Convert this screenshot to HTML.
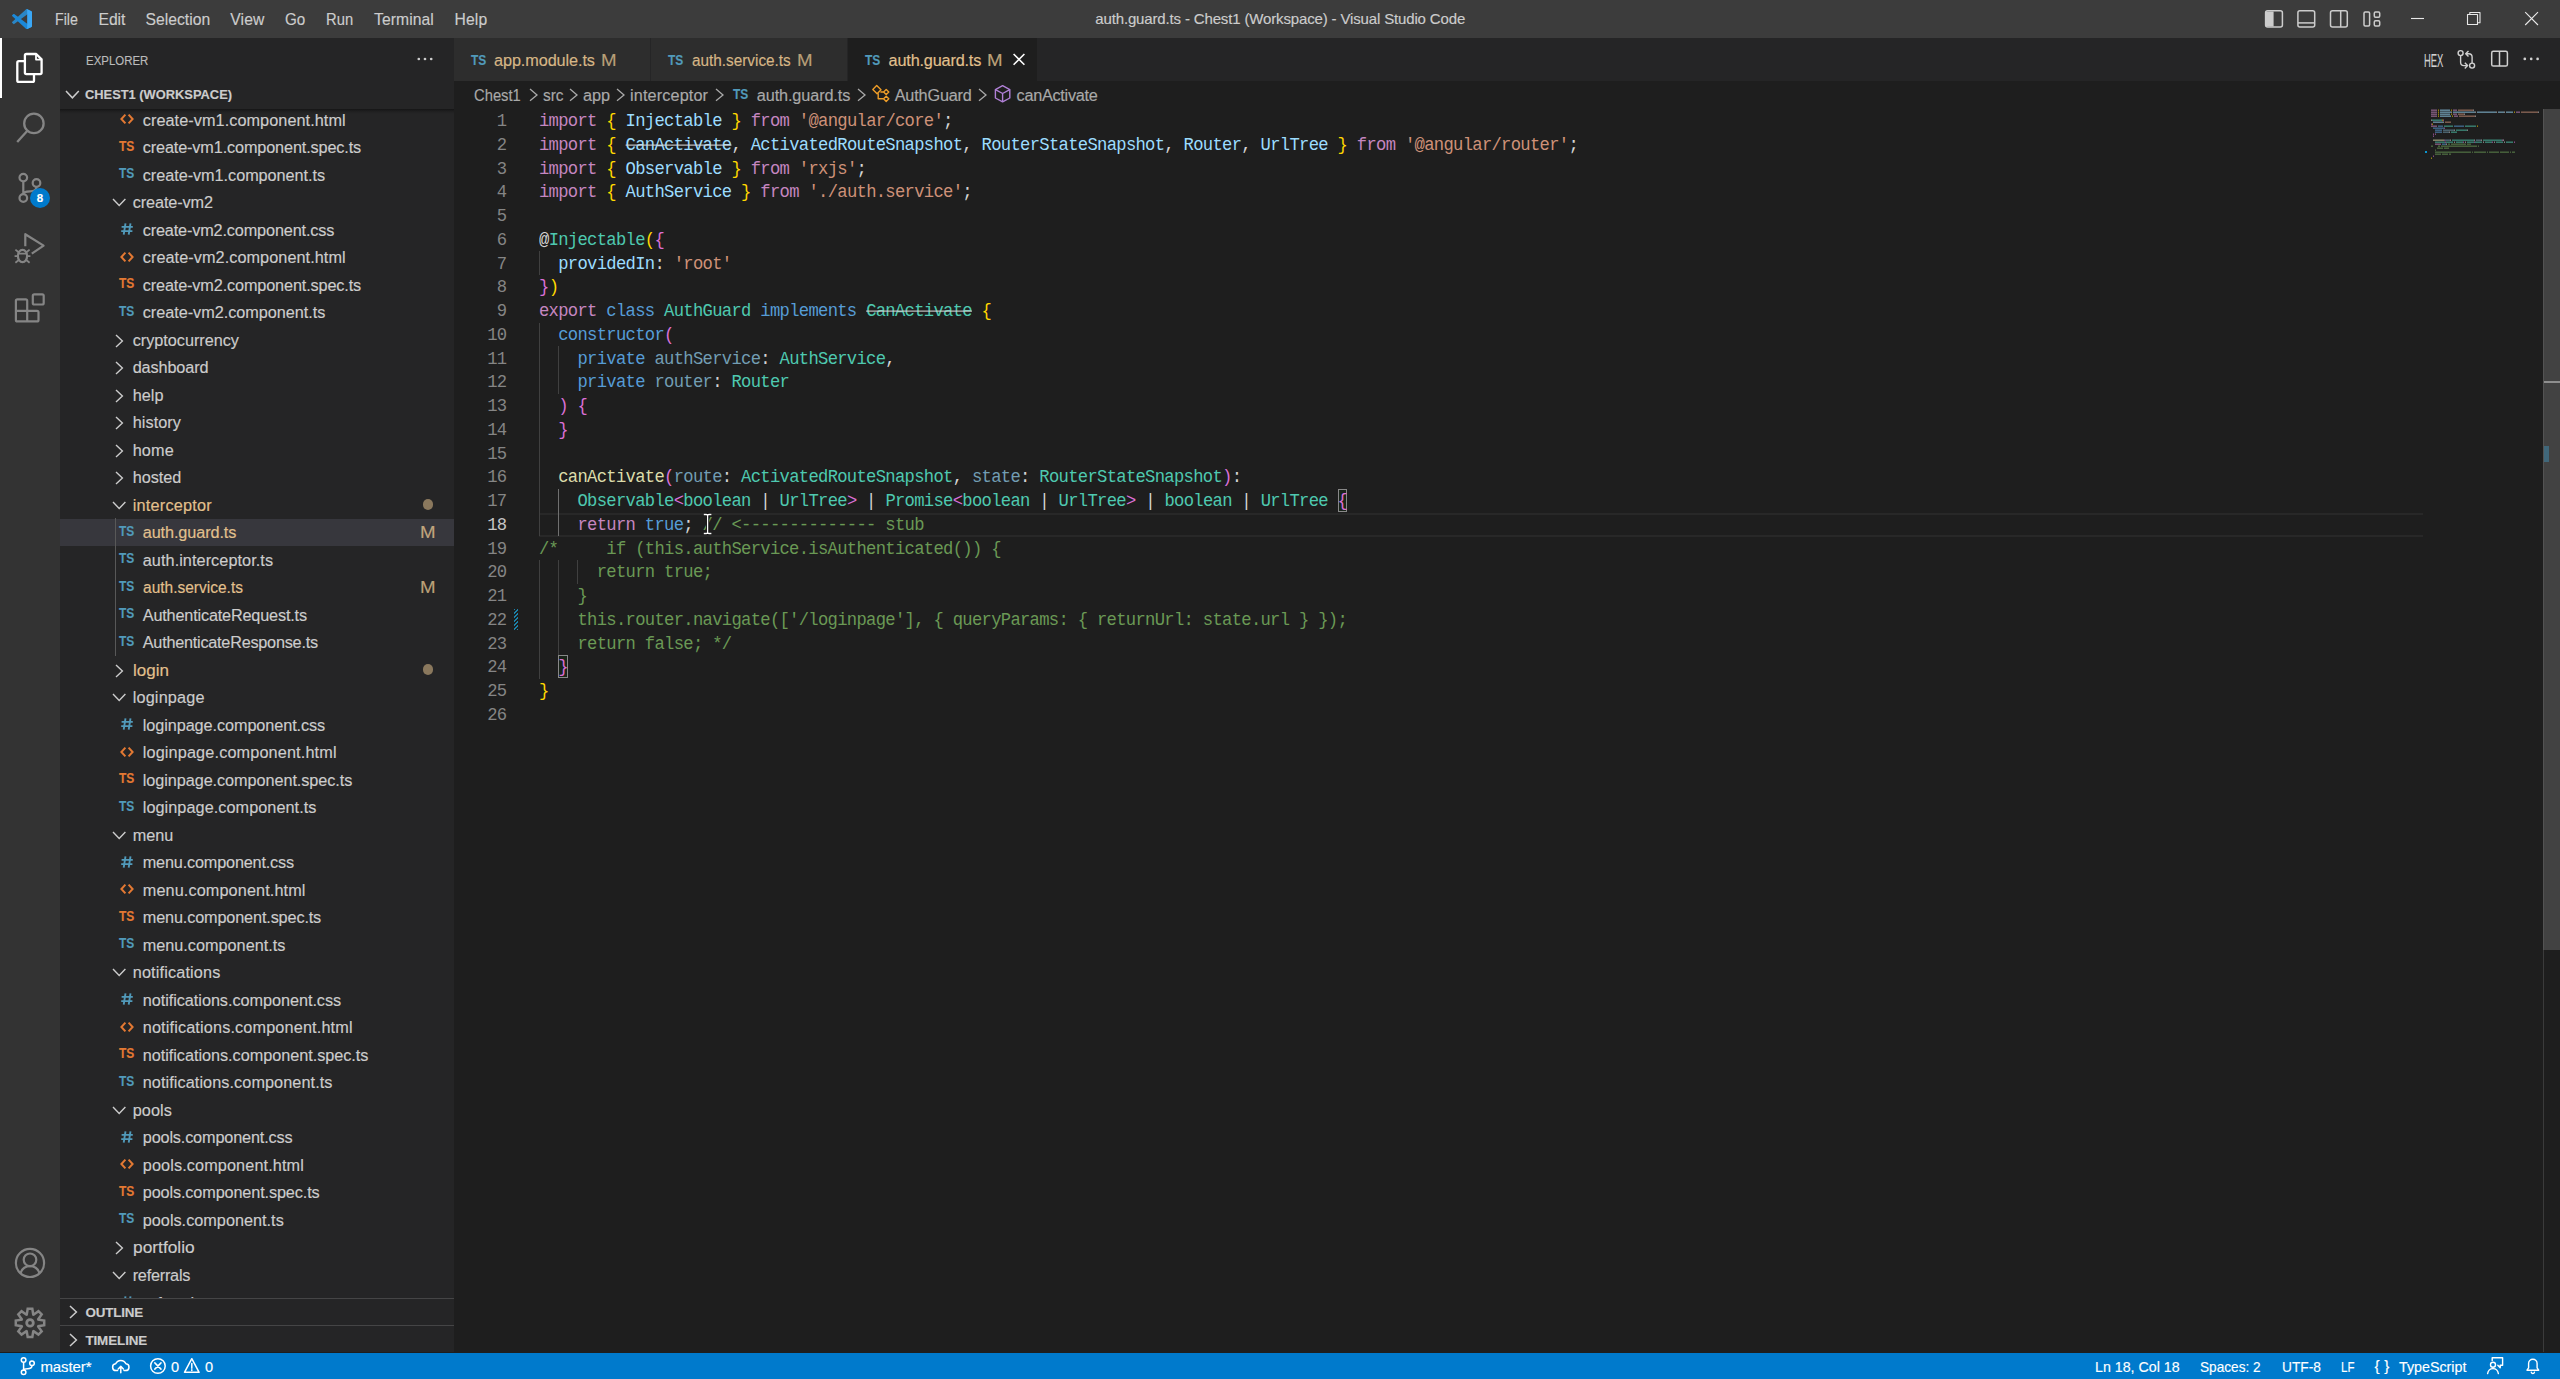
<!DOCTYPE html>
<html><head><meta charset="utf-8"><title>auth.guard.ts - Chest1 (Workspace) - Visual Studio Code</title>
<style>
*{margin:0;padding:0;box-sizing:border-box}
html,body{width:2560px;height:1379px;overflow:hidden;background:#1e1e1e}
body{position:relative;font-family:"Liberation Sans",sans-serif}
.b{position:absolute;display:block}
.t{position:absolute;white-space:pre;line-height:1;font-family:"Liberation Sans",sans-serif;-webkit-text-stroke:.15px currentColor}
.m{font-family:"Liberation Mono",monospace}
.ln,.cl{position:absolute;white-space:pre;font-family:"Liberation Mono",monospace;font-size:17.2px;line-height:23.75px;height:23.75px;letter-spacing:-0.6942px}
.ln{transform:scaleY(1.04);transform-origin:0 16.5px;left:454px;width:52.39px;text-align:right}
.cl{left:539.0px;color:#d4d4d4;transform:scaleY(1.08);transform-origin:0 16.5px}
.s{text-decoration:line-through #d4d4d4 1px}
</style></head>
<body>
<div class="b" style="left:454px;top:38px;width:2106px;height:43.5px;background:#252526;"></div>
<div class="b" style="left:454px;top:81px;width:2106px;height:1271px;background:#1e1e1e;"></div>
<div class="b" style="left:454px;top:38px;width:196px;height:43px;background:#2d2d2d;"></div>
<div class="b" style="left:651px;top:38px;width:196px;height:43px;background:#2d2d2d;"></div>
<div class="b" style="left:848px;top:38px;width:189px;height:43.5px;background:#1e1e1e;"></div>
<span class="t" style="left:470.60px;top:52.00px;font-size:15.0px;color:#519aba;font-weight:700;transform:scaleX(0.7980);transform-origin:0 0;">TS</span>
<span class="t" style="left:494.00px;top:52.00px;font-size:16.25px;color:#d6b686;letter-spacing:-0.091px;">app.module.ts</span>
<span class="t" style="left:600.50px;top:53.00px;font-size:16.7px;color:#b89f78;transform:scaleX(1.1204);transform-origin:0 0;">M</span>
<span class="t" style="left:668.10px;top:52.00px;font-size:15.0px;color:#519aba;font-weight:700;transform:scaleX(0.7980);transform-origin:0 0;">TS</span>
<span class="t" style="left:692.20px;top:52.00px;font-size:16.25px;color:#d6b686;transform:scaleX(0.9429);transform-origin:0 0;">auth.service.ts</span>
<span class="t" style="left:797.40px;top:53.00px;font-size:16.7px;color:#b89f78;transform:scaleX(1.1204);transform-origin:0 0;">M</span>
<span class="t" style="left:865.20px;top:52.00px;font-size:15.0px;color:#519aba;font-weight:700;transform:scaleX(0.7980);transform-origin:0 0;">TS</span>
<span class="t" style="left:888.60px;top:52.00px;font-size:16.25px;color:#e2c08d;letter-spacing:-0.180px;">auth.guard.ts</span>
<span class="t" style="left:987.20px;top:53.00px;font-size:16.7px;color:#bda279;transform:scaleX(1.1204);transform-origin:0 0;">M</span>
<svg class="b" style="left:1010px;top:50px" width="18" height="18" viewBox="1010 50 18 18" fill="none" stroke="#ffffff" stroke-width="1.6"><path d="M1013.6 54l10.800 10.800M1024.400 54l-10.800 10.800"/></svg>
<span class="t" style="left:2423.90px;top:53.00px;font-size:17.6px;color:#d0d0d0;transform:scaleX(.535);transform-origin:0 0">HEX</span>
<svg class="b" style="left:2450px;top:46px" width="100" height="26" viewBox="2450 46 100 26" fill="none" stroke="#d0d0d0" stroke-width="1.4" stroke-linejoin="round">
<circle cx="2460.600" cy="53.100" r="2.500"/><circle cx="2472.100" cy="65.600" r="2.500"/>
<path d="M2460.600 55.600v6.600q0 3.400 3.400 3.400h3.400M2464.800 62.800l2.800 2.800l-2.800 2.800"/>
<path d="M2472.100 63.100v-6q0-3.400-3.400-3.400h-2.800M2468.500 50.900l-2.800 2.800l2.800 2.800"/>
<rect x="2491.700" y="51.300" width="15.700" height="14.800" rx="1.600" stroke-width="1.500"/><path d="M2499.500 51.300v14.800" stroke-width="1.500"/>
<g fill="#d0d0d0" stroke="none"><circle cx="2524.800" cy="58.900" r="1.350"/><circle cx="2531.200" cy="58.900" r="1.350"/><circle cx="2537.600" cy="58.900" r="1.350"/></g>
</svg>
<span class="t" style="left:473.75px;top:87.00px;font-size:16.25px;color:#a9a9a9;transform:scaleX(0.9087);transform-origin:0 0;">Chest1</span>
<svg class="b" style="left:527.80px;top:86.95px" width="11.00" height="15.80" viewBox="527.80 86.95 11.00 15.80" fill="none" stroke="#a9a9a9" stroke-width="1.3"><path d="M529.80 88.95L536.80 94.85L529.80 100.75"/></svg>
<span class="t" style="left:542.50px;top:87.00px;font-size:16.25px;color:#a9a9a9;transform:scaleX(0.9505);transform-origin:0 0;">src</span>
<svg class="b" style="left:568.00px;top:86.95px" width="11.00" height="15.80" viewBox="568.00 86.95 11.00 15.80" fill="none" stroke="#a9a9a9" stroke-width="1.3"><path d="M570.00 88.95L577.00 94.85L570.00 100.75"/></svg>
<span class="t" style="left:582.90px;top:87.00px;font-size:16.25px;color:#a9a9a9;letter-spacing:-0.012px;">app</span>
<svg class="b" style="left:615.00px;top:86.95px" width="11.00" height="15.80" viewBox="615.00 86.95 11.00 15.80" fill="none" stroke="#a9a9a9" stroke-width="1.3"><path d="M617.00 88.95L624.00 94.85L617.00 100.75"/></svg>
<span class="t" style="left:630.00px;top:87.00px;font-size:16.25px;color:#a9a9a9;letter-spacing:0.122px;">interceptor</span>
<svg class="b" style="left:714.30px;top:86.95px" width="11.00" height="15.80" viewBox="714.30 86.95 11.00 15.80" fill="none" stroke="#a9a9a9" stroke-width="1.3"><path d="M716.30 88.95L723.30 94.85L716.30 100.75"/></svg>
<span class="t" style="left:733.40px;top:87.00px;font-size:14.3px;color:#519aba;font-weight:700;transform:scaleX(0.8369);transform-origin:0 0;">TS</span>
<span class="t" style="left:756.80px;top:87.00px;font-size:16.25px;color:#a9a9a9;letter-spacing:-0.113px;">auth.guard.ts</span>
<svg class="b" style="left:855.50px;top:86.95px" width="11.00" height="15.80" viewBox="855.50 86.95 11.00 15.80" fill="none" stroke="#a9a9a9" stroke-width="1.3"><path d="M857.50 88.95L864.50 94.85L857.50 100.75"/></svg>
<svg class="b" style="left:870px;top:83px" width="22" height="22" viewBox="870 83 22 22" fill="none" stroke="#ee9d28" stroke-width="1.400" stroke-linejoin="round">
<path d="M876.700 85.500l4.300 4.300l-3.900 3.900l-4.300 -4.300z"/>
<path d="M886.200 89.400l2.600 2.600l-2.600 2.600l-2.600 -2.600z"/>
<path d="M886.200 96.200l2.600 2.600l-2.600 2.600l-2.600 -2.600z"/>
<path d="M878.200 93.200v5.600h5.400M880.400 92h3.200"/>
</svg>
<span class="t" style="left:894.70px;top:87.00px;font-size:16.25px;color:#a9a9a9;letter-spacing:-0.174px;">AuthGuard</span>
<svg class="b" style="left:977.40px;top:86.95px" width="11.00" height="15.80" viewBox="977.40 86.95 11.00 15.80" fill="none" stroke="#a9a9a9" stroke-width="1.3"><path d="M979.40 88.95L986.40 94.85L979.40 100.75"/></svg>
<svg class="b" style="left:992px;top:83px" width="22" height="22" viewBox="992 83 22 22" fill="none" stroke="#b180d7" stroke-width="1.400" stroke-linejoin="round">
<path d="M1002.600 85.700l7.200 3.900v8.400l-7.200 3.900l-7.200 -3.900v-8.400z"/><path d="M995.400 89.600l7.200 3.900l7.200 -3.900M1002.600 93.500v8.400"/>
</svg>
<span class="t" style="left:1016.60px;top:87.00px;font-size:16.25px;color:#a9a9a9;letter-spacing:-0.282px;">canActivate</span>
<div class="b" style="left:539.4px;top:513px;width:1883.6px;height:2px;background:#282828;"></div>
<div class="b" style="left:539.4px;top:535px;width:1883.6px;height:2px;background:#282828;"></div>
<div class="b" style="left:539px;top:251.25px;width:1px;height:23.75px;background:#404040;"></div>
<div class="b" style="left:539px;top:322.5px;width:1px;height:213.75px;background:#404040;"></div>
<div class="b" style="left:539px;top:560.0px;width:1px;height:118.75px;background:#404040;"></div>
<div class="b" style="left:558px;top:346.25px;width:1px;height:47.5px;background:#404040;"></div>
<div class="b" style="left:558px;top:488.75px;width:1px;height:47.5px;background:#707070;"></div>
<div class="b" style="left:558px;top:560.0px;width:1px;height:95.0px;background:#404040;"></div>
<div class="b" style="left:577px;top:560.0px;width:1px;height:23.75px;background:#404040;"></div>
<div class="b" style="left:1337.76px;top:489.15px;width:9.62px;height:23.15px;border:1px solid #888;background:rgba(0,100,0,.1)"></div>
<div class="b" style="left:557.94px;top:655.00px;width:9.62px;height:23.45px;border:1px solid #888;background:rgba(0,100,0,.1)"></div>
<div class="b" style="left:513.6px;top:608.70px;width:4.2px;height:21.55px;background:repeating-linear-gradient(-45deg,#1b81a8 0 1.4px,#1e1e1e 1.4px 2.8px)"></div>
<div class="ln" style="top:110.00px;color:#858585">1</div>
<div class="cl" style="top:110.00px"><span style="color:#C586C0">import</span><span style="color:#D4D4D4"> </span><span style="color:#FFD700">{</span><span style="color:#9CDCFE"> Injectable </span><span style="color:#FFD700">}</span><span style="color:#C586C0"> from </span><span style="color:#CE9178">'@angular/core'</span><span style="color:#D4D4D4">;</span></div>
<div class="ln" style="top:133.75px;color:#858585">2</div>
<div class="cl" style="top:133.75px"><span style="color:#C586C0">import</span><span style="color:#D4D4D4"> </span><span style="color:#FFD700">{</span><span style="color:#D4D4D4"> </span><span class=s style="color:#9CDCFE">CanActivate</span><span style="color:#D4D4D4">, </span><span style="color:#9CDCFE">ActivatedRouteSnapshot</span><span style="color:#D4D4D4">, </span><span style="color:#9CDCFE">RouterStateSnapshot</span><span style="color:#D4D4D4">, </span><span style="color:#9CDCFE">Router</span><span style="color:#D4D4D4">, </span><span style="color:#9CDCFE">UrlTree</span><span style="color:#D4D4D4"> </span><span style="color:#FFD700">}</span><span style="color:#C586C0"> from </span><span style="color:#CE9178">'@angular/router'</span><span style="color:#D4D4D4">;</span></div>
<div class="ln" style="top:157.50px;color:#858585">3</div>
<div class="cl" style="top:157.50px"><span style="color:#C586C0">import</span><span style="color:#D4D4D4"> </span><span style="color:#FFD700">{</span><span style="color:#9CDCFE"> Observable </span><span style="color:#FFD700">}</span><span style="color:#C586C0"> from </span><span style="color:#CE9178">'rxjs'</span><span style="color:#D4D4D4">;</span></div>
<div class="ln" style="top:181.25px;color:#858585">4</div>
<div class="cl" style="top:181.25px"><span style="color:#C586C0">import</span><span style="color:#D4D4D4"> </span><span style="color:#FFD700">{</span><span style="color:#9CDCFE"> AuthService </span><span style="color:#FFD700">}</span><span style="color:#C586C0"> from </span><span style="color:#CE9178">'./auth.service'</span><span style="color:#D4D4D4">;</span></div>
<div class="ln" style="top:205.00px;color:#858585">5</div>
<div class="ln" style="top:228.75px;color:#858585">6</div>
<div class="cl" style="top:228.75px"><span style="color:#D4D4D4">@</span><span style="color:#4EC9B0">Injectable</span><span style="color:#FFD700">(</span><span style="color:#DA70D6">{</span></div>
<div class="ln" style="top:252.50px;color:#858585">7</div>
<div class="cl" style="top:252.50px"><span style="color:#9CDCFE">  providedIn</span><span style="color:#D4D4D4">: </span><span style="color:#CE9178">'root'</span></div>
<div class="ln" style="top:276.25px;color:#858585">8</div>
<div class="cl" style="top:276.25px"><span style="color:#DA70D6">}</span><span style="color:#FFD700">)</span></div>
<div class="ln" style="top:300.00px;color:#858585">9</div>
<div class="cl" style="top:300.00px"><span style="color:#C586C0">export</span><span style="color:#569CD6"> class </span><span style="color:#4EC9B0">AuthGuard</span><span style="color:#569CD6"> implements </span><span class=s style="color:#4EC9B0">CanActivate</span><span style="color:#D4D4D4"> </span><span style="color:#FFD700">{</span></div>
<div class="ln" style="top:323.75px;color:#858585">10</div>
<div class="cl" style="top:323.75px"><span style="color:#569CD6">  constructor</span><span style="color:#DA70D6">(</span></div>
<div class="ln" style="top:347.50px;color:#858585">11</div>
<div class="cl" style="top:347.50px"><span style="color:#569CD6">    private </span><span style="color:#729db3">authService</span><span style="color:#D4D4D4">: </span><span style="color:#4EC9B0">AuthService</span><span style="color:#D4D4D4">,</span></div>
<div class="ln" style="top:371.25px;color:#858585">12</div>
<div class="cl" style="top:371.25px"><span style="color:#569CD6">    private </span><span style="color:#729db3">router</span><span style="color:#D4D4D4">: </span><span style="color:#4EC9B0">Router</span></div>
<div class="ln" style="top:395.00px;color:#858585">13</div>
<div class="cl" style="top:395.00px"><span style="color:#DA70D6">  ) {</span></div>
<div class="ln" style="top:418.75px;color:#858585">14</div>
<div class="cl" style="top:418.75px"><span style="color:#DA70D6">  }</span></div>
<div class="ln" style="top:442.50px;color:#858585">15</div>
<div class="ln" style="top:466.25px;color:#858585">16</div>
<div class="cl" style="top:466.25px"><span style="color:#DCDCAA">  canActivate</span><span style="color:#DA70D6">(</span><span style="color:#729db3">route</span><span style="color:#D4D4D4">: </span><span style="color:#4EC9B0">ActivatedRouteSnapshot</span><span style="color:#D4D4D4">, </span><span style="color:#729db3">state</span><span style="color:#D4D4D4">: </span><span style="color:#4EC9B0">RouterStateSnapshot</span><span style="color:#DA70D6">)</span><span style="color:#D4D4D4">:</span></div>
<div class="ln" style="top:490.00px;color:#858585">17</div>
<div class="cl" style="top:490.00px"><span style="color:#4EC9B0">    Observable</span><span style="color:#DA70D6">&lt;</span><span style="color:#4EC9B0">boolean</span><span style="color:#D4D4D4"> | </span><span style="color:#4EC9B0">UrlTree</span><span style="color:#DA70D6">&gt;</span><span style="color:#D4D4D4"> | </span><span style="color:#4EC9B0">Promise</span><span style="color:#DA70D6">&lt;</span><span style="color:#4EC9B0">boolean</span><span style="color:#D4D4D4"> | </span><span style="color:#4EC9B0">UrlTree</span><span style="color:#DA70D6">&gt;</span><span style="color:#D4D4D4"> | </span><span style="color:#4EC9B0">boolean</span><span style="color:#D4D4D4"> | </span><span style="color:#4EC9B0">UrlTree</span><span style="color:#D4D4D4"> </span><span style="color:#DA70D6">{</span></div>
<div class="ln" style="top:513.75px;color:#c6c6c6">18</div>
<div class="cl" style="top:513.75px"><span style="color:#C586C0">    return</span><span style="color:#569CD6"> true</span><span style="color:#D4D4D4">; </span><span style="color:#6A9955">// &lt;-------------- stub</span></div>
<div class="ln" style="top:537.50px;color:#858585">19</div>
<div class="cl" style="top:537.50px"><span style="color:#6A9955">/*     if (this.authService.isAuthenticated()) {</span></div>
<div class="ln" style="top:561.25px;color:#858585">20</div>
<div class="cl" style="top:561.25px"><span style="color:#6A9955">      return true;</span></div>
<div class="ln" style="top:585.00px;color:#858585">21</div>
<div class="cl" style="top:585.00px"><span style="color:#6A9955">    }</span></div>
<div class="ln" style="top:608.75px;color:#858585">22</div>
<div class="cl" style="top:608.75px"><span style="color:#6A9955">    this.router.navigate(['/loginpage'], { queryParams: { returnUrl: state.url } });</span></div>
<div class="ln" style="top:632.50px;color:#858585">23</div>
<div class="cl" style="top:632.50px"><span style="color:#6A9955">    return false; */</span></div>
<div class="ln" style="top:656.25px;color:#858585">24</div>
<div class="cl" style="top:656.25px"><span style="color:#DA70D6">  }</span></div>
<div class="ln" style="top:680.00px;color:#858585">25</div>
<div class="cl" style="top:680.00px"><span style="color:#FFD700">}</span></div>
<div class="ln" style="top:703.75px;color:#858585">26</div>
<svg class="b" style="left:700px;top:511px" width="16" height="26" viewBox="700 511 16 26" fill="none">
<path d="M703.800 514.500h2.600q1.200 0 1.200 1.200v16.600q0 1.200-1.200 1.200h-2.600M711.400 514.500h-2.600q-1.200 0-1.200 1.200M711.400 533.500h-2.600q-1.200 0-1.200-1.200" stroke="#111" stroke-width="3.200"/>
<path d="M703.800 514.500h2.600q1.200 0 1.200 1.200v16.600q0 1.200-1.200 1.200h-2.600M711.400 514.500h-2.600q-1.200 0-1.200 1.200M711.400 533.500h-2.600q-1.200 0-1.200-1.200" stroke="#fff" stroke-width="1.300"/>
</svg>
<svg class="b" style="left:2420px;top:109px" width="124" height="60" viewBox="2420 109 124 60"><rect x="2431" y="109" width="6" height="1" fill="#C586C0" opacity=".3"/><rect x="2431" y="110" width="6" height="1" fill="#C586C0" opacity=".52"/><rect x="2438" y="109" width="1" height="1" fill="#FFD700" opacity=".3"/><rect x="2438" y="110" width="1" height="1" fill="#FFD700" opacity=".52"/><rect x="2440" y="109" width="10" height="1" fill="#9CDCFE" opacity=".3"/><rect x="2440" y="110" width="10" height="1" fill="#9CDCFE" opacity=".52"/><rect x="2451" y="109" width="1" height="1" fill="#FFD700" opacity=".3"/><rect x="2451" y="110" width="1" height="1" fill="#FFD700" opacity=".52"/><rect x="2453" y="109" width="4" height="1" fill="#C586C0" opacity=".3"/><rect x="2453" y="110" width="4" height="1" fill="#C586C0" opacity=".52"/><rect x="2458" y="109" width="15" height="1" fill="#CE9178" opacity=".3"/><rect x="2458" y="110" width="15" height="1" fill="#CE9178" opacity=".52"/><rect x="2473" y="109" width="1" height="1" fill="#D4D4D4" opacity=".3"/><rect x="2473" y="110" width="1" height="1" fill="#D4D4D4" opacity=".52"/><rect x="2431" y="111" width="6" height="1" fill="#C586C0" opacity=".3"/><rect x="2431" y="112" width="6" height="1" fill="#C586C0" opacity=".52"/><rect x="2438" y="111" width="1" height="1" fill="#FFD700" opacity=".3"/><rect x="2438" y="112" width="1" height="1" fill="#FFD700" opacity=".52"/><rect x="2440" y="111" width="11" height="1" fill="#9CDCFE" opacity=".3"/><rect x="2440" y="112" width="11" height="1" fill="#9CDCFE" opacity=".52"/><rect x="2451" y="111" width="1" height="1" fill="#D4D4D4" opacity=".3"/><rect x="2451" y="112" width="1" height="1" fill="#D4D4D4" opacity=".52"/><rect x="2453" y="111" width="22" height="1" fill="#9CDCFE" opacity=".3"/><rect x="2453" y="112" width="22" height="1" fill="#9CDCFE" opacity=".52"/><rect x="2475" y="111" width="1" height="1" fill="#D4D4D4" opacity=".3"/><rect x="2475" y="112" width="1" height="1" fill="#D4D4D4" opacity=".52"/><rect x="2477" y="111" width="19" height="1" fill="#9CDCFE" opacity=".3"/><rect x="2477" y="112" width="19" height="1" fill="#9CDCFE" opacity=".52"/><rect x="2496" y="111" width="1" height="1" fill="#D4D4D4" opacity=".3"/><rect x="2496" y="112" width="1" height="1" fill="#D4D4D4" opacity=".52"/><rect x="2498" y="111" width="6" height="1" fill="#9CDCFE" opacity=".3"/><rect x="2498" y="112" width="6" height="1" fill="#9CDCFE" opacity=".52"/><rect x="2504" y="111" width="1" height="1" fill="#D4D4D4" opacity=".3"/><rect x="2504" y="112" width="1" height="1" fill="#D4D4D4" opacity=".52"/><rect x="2506" y="111" width="7" height="1" fill="#9CDCFE" opacity=".3"/><rect x="2506" y="112" width="7" height="1" fill="#9CDCFE" opacity=".52"/><rect x="2514" y="111" width="1" height="1" fill="#FFD700" opacity=".3"/><rect x="2514" y="112" width="1" height="1" fill="#FFD700" opacity=".52"/><rect x="2516" y="111" width="4" height="1" fill="#C586C0" opacity=".3"/><rect x="2516" y="112" width="4" height="1" fill="#C586C0" opacity=".52"/><rect x="2521" y="111" width="17" height="1" fill="#CE9178" opacity=".3"/><rect x="2521" y="112" width="17" height="1" fill="#CE9178" opacity=".52"/><rect x="2538" y="111" width="1" height="1" fill="#D4D4D4" opacity=".3"/><rect x="2538" y="112" width="1" height="1" fill="#D4D4D4" opacity=".52"/><rect x="2431" y="113" width="6" height="1" fill="#C586C0" opacity=".3"/><rect x="2431" y="114" width="6" height="1" fill="#C586C0" opacity=".52"/><rect x="2438" y="113" width="1" height="1" fill="#FFD700" opacity=".3"/><rect x="2438" y="114" width="1" height="1" fill="#FFD700" opacity=".52"/><rect x="2440" y="113" width="10" height="1" fill="#9CDCFE" opacity=".3"/><rect x="2440" y="114" width="10" height="1" fill="#9CDCFE" opacity=".52"/><rect x="2451" y="113" width="1" height="1" fill="#FFD700" opacity=".3"/><rect x="2451" y="114" width="1" height="1" fill="#FFD700" opacity=".52"/><rect x="2453" y="113" width="4" height="1" fill="#C586C0" opacity=".3"/><rect x="2453" y="114" width="4" height="1" fill="#C586C0" opacity=".52"/><rect x="2458" y="113" width="6" height="1" fill="#CE9178" opacity=".3"/><rect x="2458" y="114" width="6" height="1" fill="#CE9178" opacity=".52"/><rect x="2464" y="113" width="1" height="1" fill="#D4D4D4" opacity=".3"/><rect x="2464" y="114" width="1" height="1" fill="#D4D4D4" opacity=".52"/><rect x="2431" y="115" width="6" height="1" fill="#C586C0" opacity=".3"/><rect x="2431" y="116" width="6" height="1" fill="#C586C0" opacity=".52"/><rect x="2438" y="115" width="1" height="1" fill="#FFD700" opacity=".3"/><rect x="2438" y="116" width="1" height="1" fill="#FFD700" opacity=".52"/><rect x="2440" y="115" width="11" height="1" fill="#9CDCFE" opacity=".3"/><rect x="2440" y="116" width="11" height="1" fill="#9CDCFE" opacity=".52"/><rect x="2452" y="115" width="1" height="1" fill="#FFD700" opacity=".3"/><rect x="2452" y="116" width="1" height="1" fill="#FFD700" opacity=".52"/><rect x="2454" y="115" width="4" height="1" fill="#C586C0" opacity=".3"/><rect x="2454" y="116" width="4" height="1" fill="#C586C0" opacity=".52"/><rect x="2459" y="115" width="16" height="1" fill="#CE9178" opacity=".3"/><rect x="2459" y="116" width="16" height="1" fill="#CE9178" opacity=".52"/><rect x="2475" y="115" width="1" height="1" fill="#D4D4D4" opacity=".3"/><rect x="2475" y="116" width="1" height="1" fill="#D4D4D4" opacity=".52"/><rect x="2431" y="119" width="1" height="1" fill="#D4D4D4" opacity=".3"/><rect x="2431" y="120" width="1" height="1" fill="#D4D4D4" opacity=".52"/><rect x="2432" y="119" width="10" height="1" fill="#4EC9B0" opacity=".3"/><rect x="2432" y="120" width="10" height="1" fill="#4EC9B0" opacity=".52"/><rect x="2442" y="119" width="1" height="1" fill="#FFD700" opacity=".3"/><rect x="2442" y="120" width="1" height="1" fill="#FFD700" opacity=".52"/><rect x="2443" y="119" width="1" height="1" fill="#DA70D6" opacity=".3"/><rect x="2443" y="120" width="1" height="1" fill="#DA70D6" opacity=".52"/><rect x="2433" y="121" width="10" height="1" fill="#9CDCFE" opacity=".3"/><rect x="2433" y="122" width="10" height="1" fill="#9CDCFE" opacity=".52"/><rect x="2443" y="121" width="1" height="1" fill="#D4D4D4" opacity=".3"/><rect x="2443" y="122" width="1" height="1" fill="#D4D4D4" opacity=".52"/><rect x="2445" y="121" width="6" height="1" fill="#CE9178" opacity=".3"/><rect x="2445" y="122" width="6" height="1" fill="#CE9178" opacity=".52"/><rect x="2431" y="123" width="1" height="1" fill="#DA70D6" opacity=".3"/><rect x="2431" y="124" width="1" height="1" fill="#DA70D6" opacity=".52"/><rect x="2432" y="123" width="1" height="1" fill="#FFD700" opacity=".3"/><rect x="2432" y="124" width="1" height="1" fill="#FFD700" opacity=".52"/><rect x="2431" y="125" width="6" height="1" fill="#C586C0" opacity=".3"/><rect x="2431" y="126" width="6" height="1" fill="#C586C0" opacity=".52"/><rect x="2438" y="125" width="5" height="1" fill="#569CD6" opacity=".3"/><rect x="2438" y="126" width="5" height="1" fill="#569CD6" opacity=".52"/><rect x="2444" y="125" width="9" height="1" fill="#4EC9B0" opacity=".3"/><rect x="2444" y="126" width="9" height="1" fill="#4EC9B0" opacity=".52"/><rect x="2454" y="125" width="10" height="1" fill="#569CD6" opacity=".3"/><rect x="2454" y="126" width="10" height="1" fill="#569CD6" opacity=".52"/><rect x="2465" y="125" width="11" height="1" fill="#4EC9B0" opacity=".3"/><rect x="2465" y="126" width="11" height="1" fill="#4EC9B0" opacity=".52"/><rect x="2477" y="125" width="1" height="1" fill="#FFD700" opacity=".3"/><rect x="2477" y="126" width="1" height="1" fill="#FFD700" opacity=".52"/><rect x="2433" y="127" width="11" height="1" fill="#569CD6" opacity=".3"/><rect x="2433" y="128" width="11" height="1" fill="#569CD6" opacity=".52"/><rect x="2444" y="127" width="1" height="1" fill="#DA70D6" opacity=".3"/><rect x="2444" y="128" width="1" height="1" fill="#DA70D6" opacity=".52"/><rect x="2435" y="129" width="7" height="1" fill="#569CD6" opacity=".3"/><rect x="2435" y="130" width="7" height="1" fill="#569CD6" opacity=".52"/><rect x="2443" y="129" width="11" height="1" fill="#729db3" opacity=".3"/><rect x="2443" y="130" width="11" height="1" fill="#729db3" opacity=".52"/><rect x="2454" y="129" width="1" height="1" fill="#D4D4D4" opacity=".3"/><rect x="2454" y="130" width="1" height="1" fill="#D4D4D4" opacity=".52"/><rect x="2456" y="129" width="11" height="1" fill="#4EC9B0" opacity=".3"/><rect x="2456" y="130" width="11" height="1" fill="#4EC9B0" opacity=".52"/><rect x="2467" y="129" width="1" height="1" fill="#D4D4D4" opacity=".3"/><rect x="2467" y="130" width="1" height="1" fill="#D4D4D4" opacity=".52"/><rect x="2435" y="131" width="7" height="1" fill="#569CD6" opacity=".3"/><rect x="2435" y="132" width="7" height="1" fill="#569CD6" opacity=".52"/><rect x="2443" y="131" width="6" height="1" fill="#729db3" opacity=".3"/><rect x="2443" y="132" width="6" height="1" fill="#729db3" opacity=".52"/><rect x="2449" y="131" width="1" height="1" fill="#D4D4D4" opacity=".3"/><rect x="2449" y="132" width="1" height="1" fill="#D4D4D4" opacity=".52"/><rect x="2451" y="131" width="6" height="1" fill="#4EC9B0" opacity=".3"/><rect x="2451" y="132" width="6" height="1" fill="#4EC9B0" opacity=".52"/><rect x="2433" y="133" width="1" height="1" fill="#DA70D6" opacity=".3"/><rect x="2433" y="134" width="1" height="1" fill="#DA70D6" opacity=".52"/><rect x="2435" y="133" width="1" height="1" fill="#DA70D6" opacity=".3"/><rect x="2435" y="134" width="1" height="1" fill="#DA70D6" opacity=".52"/><rect x="2433" y="135" width="1" height="1" fill="#DA70D6" opacity=".3"/><rect x="2433" y="136" width="1" height="1" fill="#DA70D6" opacity=".52"/><rect x="2433" y="139" width="11" height="1" fill="#DCDCAA" opacity=".3"/><rect x="2433" y="140" width="11" height="1" fill="#DCDCAA" opacity=".52"/><rect x="2444" y="139" width="1" height="1" fill="#DA70D6" opacity=".3"/><rect x="2444" y="140" width="1" height="1" fill="#DA70D6" opacity=".52"/><rect x="2445" y="139" width="5" height="1" fill="#729db3" opacity=".3"/><rect x="2445" y="140" width="5" height="1" fill="#729db3" opacity=".52"/><rect x="2450" y="139" width="1" height="1" fill="#D4D4D4" opacity=".3"/><rect x="2450" y="140" width="1" height="1" fill="#D4D4D4" opacity=".52"/><rect x="2452" y="139" width="22" height="1" fill="#4EC9B0" opacity=".3"/><rect x="2452" y="140" width="22" height="1" fill="#4EC9B0" opacity=".52"/><rect x="2474" y="139" width="1" height="1" fill="#D4D4D4" opacity=".3"/><rect x="2474" y="140" width="1" height="1" fill="#D4D4D4" opacity=".52"/><rect x="2476" y="139" width="5" height="1" fill="#729db3" opacity=".3"/><rect x="2476" y="140" width="5" height="1" fill="#729db3" opacity=".52"/><rect x="2481" y="139" width="1" height="1" fill="#D4D4D4" opacity=".3"/><rect x="2481" y="140" width="1" height="1" fill="#D4D4D4" opacity=".52"/><rect x="2483" y="139" width="19" height="1" fill="#4EC9B0" opacity=".3"/><rect x="2483" y="140" width="19" height="1" fill="#4EC9B0" opacity=".52"/><rect x="2502" y="139" width="1" height="1" fill="#DA70D6" opacity=".3"/><rect x="2502" y="140" width="1" height="1" fill="#DA70D6" opacity=".52"/><rect x="2503" y="139" width="1" height="1" fill="#D4D4D4" opacity=".3"/><rect x="2503" y="140" width="1" height="1" fill="#D4D4D4" opacity=".52"/><rect x="2435" y="141" width="10" height="1" fill="#4EC9B0" opacity=".3"/><rect x="2435" y="142" width="10" height="1" fill="#4EC9B0" opacity=".52"/><rect x="2445" y="141" width="1" height="1" fill="#DA70D6" opacity=".3"/><rect x="2445" y="142" width="1" height="1" fill="#DA70D6" opacity=".52"/><rect x="2446" y="141" width="7" height="1" fill="#4EC9B0" opacity=".3"/><rect x="2446" y="142" width="7" height="1" fill="#4EC9B0" opacity=".52"/><rect x="2454" y="141" width="1" height="1" fill="#D4D4D4" opacity=".3"/><rect x="2454" y="142" width="1" height="1" fill="#D4D4D4" opacity=".52"/><rect x="2456" y="141" width="7" height="1" fill="#4EC9B0" opacity=".3"/><rect x="2456" y="142" width="7" height="1" fill="#4EC9B0" opacity=".52"/><rect x="2463" y="141" width="1" height="1" fill="#DA70D6" opacity=".3"/><rect x="2463" y="142" width="1" height="1" fill="#DA70D6" opacity=".52"/><rect x="2465" y="141" width="1" height="1" fill="#D4D4D4" opacity=".3"/><rect x="2465" y="142" width="1" height="1" fill="#D4D4D4" opacity=".52"/><rect x="2467" y="141" width="7" height="1" fill="#4EC9B0" opacity=".3"/><rect x="2467" y="142" width="7" height="1" fill="#4EC9B0" opacity=".52"/><rect x="2474" y="141" width="1" height="1" fill="#DA70D6" opacity=".3"/><rect x="2474" y="142" width="1" height="1" fill="#DA70D6" opacity=".52"/><rect x="2475" y="141" width="7" height="1" fill="#4EC9B0" opacity=".3"/><rect x="2475" y="142" width="7" height="1" fill="#4EC9B0" opacity=".52"/><rect x="2483" y="141" width="1" height="1" fill="#D4D4D4" opacity=".3"/><rect x="2483" y="142" width="1" height="1" fill="#D4D4D4" opacity=".52"/><rect x="2485" y="141" width="7" height="1" fill="#4EC9B0" opacity=".3"/><rect x="2485" y="142" width="7" height="1" fill="#4EC9B0" opacity=".52"/><rect x="2492" y="141" width="1" height="1" fill="#DA70D6" opacity=".3"/><rect x="2492" y="142" width="1" height="1" fill="#DA70D6" opacity=".52"/><rect x="2494" y="141" width="1" height="1" fill="#D4D4D4" opacity=".3"/><rect x="2494" y="142" width="1" height="1" fill="#D4D4D4" opacity=".52"/><rect x="2496" y="141" width="7" height="1" fill="#4EC9B0" opacity=".3"/><rect x="2496" y="142" width="7" height="1" fill="#4EC9B0" opacity=".52"/><rect x="2504" y="141" width="1" height="1" fill="#D4D4D4" opacity=".3"/><rect x="2504" y="142" width="1" height="1" fill="#D4D4D4" opacity=".52"/><rect x="2506" y="141" width="7" height="1" fill="#4EC9B0" opacity=".3"/><rect x="2506" y="142" width="7" height="1" fill="#4EC9B0" opacity=".52"/><rect x="2514" y="141" width="1" height="1" fill="#DA70D6" opacity=".3"/><rect x="2514" y="142" width="1" height="1" fill="#DA70D6" opacity=".52"/><rect x="2435" y="143" width="6" height="1" fill="#C586C0" opacity=".3"/><rect x="2435" y="144" width="6" height="1" fill="#C586C0" opacity=".52"/><rect x="2442" y="143" width="4" height="1" fill="#569CD6" opacity=".3"/><rect x="2442" y="144" width="4" height="1" fill="#569CD6" opacity=".52"/><rect x="2446" y="143" width="1" height="1" fill="#D4D4D4" opacity=".3"/><rect x="2446" y="144" width="1" height="1" fill="#D4D4D4" opacity=".52"/><rect x="2448" y="143" width="2" height="1" fill="#6A9955" opacity=".3"/><rect x="2448" y="144" width="2" height="1" fill="#6A9955" opacity=".52"/><rect x="2451" y="143" width="15" height="1" fill="#6A9955" opacity=".3"/><rect x="2451" y="144" width="15" height="1" fill="#6A9955" opacity=".52"/><rect x="2467" y="143" width="4" height="1" fill="#6A9955" opacity=".3"/><rect x="2467" y="144" width="4" height="1" fill="#6A9955" opacity=".52"/><rect x="2431" y="145" width="2" height="1" fill="#6A9955" opacity=".3"/><rect x="2431" y="146" width="2" height="1" fill="#6A9955" opacity=".52"/><rect x="2438" y="145" width="2" height="1" fill="#6A9955" opacity=".3"/><rect x="2438" y="146" width="2" height="1" fill="#6A9955" opacity=".52"/><rect x="2441" y="145" width="36" height="1" fill="#6A9955" opacity=".3"/><rect x="2441" y="146" width="36" height="1" fill="#6A9955" opacity=".52"/><rect x="2478" y="145" width="1" height="1" fill="#6A9955" opacity=".3"/><rect x="2478" y="146" width="1" height="1" fill="#6A9955" opacity=".52"/><rect x="2437" y="147" width="6" height="1" fill="#6A9955" opacity=".3"/><rect x="2437" y="148" width="6" height="1" fill="#6A9955" opacity=".52"/><rect x="2444" y="147" width="5" height="1" fill="#6A9955" opacity=".3"/><rect x="2444" y="148" width="5" height="1" fill="#6A9955" opacity=".52"/><rect x="2435" y="149" width="1" height="1" fill="#6A9955" opacity=".3"/><rect x="2435" y="150" width="1" height="1" fill="#6A9955" opacity=".52"/><rect x="2435" y="151" width="36" height="1" fill="#6A9955" opacity=".3"/><rect x="2435" y="152" width="36" height="1" fill="#6A9955" opacity=".52"/><rect x="2472" y="151" width="1" height="1" fill="#6A9955" opacity=".3"/><rect x="2472" y="152" width="1" height="1" fill="#6A9955" opacity=".52"/><rect x="2474" y="151" width="12" height="1" fill="#6A9955" opacity=".3"/><rect x="2474" y="152" width="12" height="1" fill="#6A9955" opacity=".52"/><rect x="2487" y="151" width="1" height="1" fill="#6A9955" opacity=".3"/><rect x="2487" y="152" width="1" height="1" fill="#6A9955" opacity=".52"/><rect x="2489" y="151" width="10" height="1" fill="#6A9955" opacity=".3"/><rect x="2489" y="152" width="10" height="1" fill="#6A9955" opacity=".52"/><rect x="2500" y="151" width="9" height="1" fill="#6A9955" opacity=".3"/><rect x="2500" y="152" width="9" height="1" fill="#6A9955" opacity=".52"/><rect x="2510" y="151" width="1" height="1" fill="#6A9955" opacity=".3"/><rect x="2510" y="152" width="1" height="1" fill="#6A9955" opacity=".52"/><rect x="2512" y="151" width="3" height="1" fill="#6A9955" opacity=".3"/><rect x="2512" y="152" width="3" height="1" fill="#6A9955" opacity=".52"/><rect x="2435" y="153" width="6" height="1" fill="#6A9955" opacity=".3"/><rect x="2435" y="154" width="6" height="1" fill="#6A9955" opacity=".52"/><rect x="2442" y="153" width="6" height="1" fill="#6A9955" opacity=".3"/><rect x="2442" y="154" width="6" height="1" fill="#6A9955" opacity=".52"/><rect x="2449" y="153" width="2" height="1" fill="#6A9955" opacity=".3"/><rect x="2449" y="154" width="2" height="1" fill="#6A9955" opacity=".52"/><rect x="2433" y="155" width="1" height="1" fill="#DA70D6" opacity=".3"/><rect x="2433" y="156" width="1" height="1" fill="#DA70D6" opacity=".52"/><rect x="2431" y="157" width="1" height="1" fill="#FFD700" opacity=".3"/><rect x="2431" y="158" width="1" height="1" fill="#FFD700" opacity=".52"/><rect x="2425" y="151" width="2" height="2" fill="#0c95cf"/></svg>
<div class="b" style="left:2543px;top:109px;width:1px;height:1243px;background:#3b3b3b;"></div>
<div class="b" style="left:2543px;top:109px;width:17px;height:841px;background:rgba(121,121,121,.4);"></div>
<div class="b" style="left:2544px;top:381px;width:16px;height:2px;background:#8e8e8e;"></div>
<div class="b" style="left:2544px;top:446px;width:5.2px;height:16px;background:#40677a;"></div>
<div class="b" style="left:60px;top:38px;width:394px;height:1314px;background:#252526;"></div>
<span class="t" style="left:85.70px;top:54.00px;font-size:13.2px;color:#bbbbbb;transform:scaleX(0.8673);transform-origin:0 0;">EXPLORER</span>
<svg class="b" style="left:414px;top:52px" width="22" height="14" viewBox="414 52 22 14" fill="#cccccc"><circle cx="418.8" cy="59" r="1.35"/><circle cx="425" cy="59" r="1.35"/><circle cx="431.2" cy="59" r="1.35"/></svg>
<div class="b" style="left:60px;top:109px;width:394px;height:1189.5px;overflow:hidden"><div class="b" style="left:-60px;top:-109px;width:454px;height:1400px">
<svg class="b" style="left:119.20px;top:112.40px" width="16" height="14" viewBox="-8 -7 16 14" fill="none" stroke="#e37933" stroke-width="2"><path d="M-1.6 -4.4L-5.6 0L-1.6 4.4M1.6 -4.4L5.600 0L1.6 4.4"/></svg>
<span class="t" style="left:142.75px;top:112.00px;font-size:16.25px;color:#cccccc;letter-spacing:0.062px;">create-vm1.component.html</span>
<span class="t" style="left:119.40px;top:139.00px;font-size:14.3px;color:#e37933;font-weight:700;transform:scaleX(0.8369);transform-origin:0 0;">TS</span>
<span class="t" style="left:142.75px;top:139.00px;font-size:16.25px;color:#cccccc;letter-spacing:-0.137px;">create-vm1.component.spec.ts</span>
<span class="t" style="left:119.00px;top:166.00px;font-size:14.3px;color:#519aba;font-weight:700;transform:scaleX(0.8369);transform-origin:0 0;">TS</span>
<span class="t" style="left:142.75px;top:167.00px;font-size:16.25px;color:#cccccc;letter-spacing:-0.044px;">create-vm1.component.ts</span>
<svg class="b" style="left:110.50px;top:197.40px" width="16.40" height="10.60" viewBox="110.50 197.40 16.40 10.60" fill="none" stroke="#cccccc" stroke-width="1.4"><path d="M112.50 199.40L118.70 206.00L124.90 199.40"/></svg>
<span class="t" style="left:132.70px;top:194.00px;font-size:16.25px;color:#cccccc;letter-spacing:-0.098px;">create-vm2</span>
<svg class="b" style="left:119.00px;top:221.10px" width="16" height="16" viewBox="-8 -8 16 16" fill="none" stroke="#519aba" stroke-width="1.9"><path d="M-1.5 -5.600L-3.300 5.600M3.500 -5.600L1.700 5.600M-5.400 -2.100H5.800M-5.800 2.100H5.400"/></svg>
<span class="t" style="left:142.75px;top:222.00px;font-size:16.25px;color:#cccccc;letter-spacing:-0.152px;">create-vm2.component.css</span>
<svg class="b" style="left:119.20px;top:249.90px" width="16" height="14" viewBox="-8 -7 16 14" fill="none" stroke="#e37933" stroke-width="2"><path d="M-1.6 -4.4L-5.6 0L-1.6 4.4M1.6 -4.4L5.600 0L1.6 4.4"/></svg>
<span class="t" style="left:142.75px;top:249.00px;font-size:16.25px;color:#cccccc;letter-spacing:0.062px;">create-vm2.component.html</span>
<span class="t" style="left:119.40px;top:276.00px;font-size:14.3px;color:#e37933;font-weight:700;transform:scaleX(0.8369);transform-origin:0 0;">TS</span>
<span class="t" style="left:142.75px;top:277.00px;font-size:16.25px;color:#cccccc;letter-spacing:-0.137px;">create-vm2.component.spec.ts</span>
<span class="t" style="left:119.00px;top:304.00px;font-size:14.3px;color:#519aba;font-weight:700;transform:scaleX(0.8369);transform-origin:0 0;">TS</span>
<span class="t" style="left:142.75px;top:304.00px;font-size:16.25px;color:#cccccc;letter-spacing:-0.035px;">create-vm2.component.ts</span>
<svg class="b" style="left:114.40px;top:332.80px" width="10.40" height="16.00" viewBox="114.40 332.80 10.40 16.00" fill="none" stroke="#cccccc" stroke-width="1.4"><path d="M116.40 334.80L122.80 340.80L116.40 346.80"/></svg>
<span class="t" style="left:132.70px;top:332.00px;font-size:16.25px;color:#cccccc;letter-spacing:-0.020px;">cryptocurrency</span>
<svg class="b" style="left:114.40px;top:360.30px" width="10.40" height="16.00" viewBox="114.40 360.30 10.40 16.00" fill="none" stroke="#cccccc" stroke-width="1.4"><path d="M116.40 362.30L122.80 368.30L116.40 374.30"/></svg>
<span class="t" style="left:132.70px;top:359.00px;font-size:16.25px;color:#cccccc;letter-spacing:-0.127px;">dashboard</span>
<svg class="b" style="left:114.40px;top:387.80px" width="10.40" height="16.00" viewBox="114.40 387.80 10.40 16.00" fill="none" stroke="#cccccc" stroke-width="1.4"><path d="M116.40 389.80L122.80 395.80L116.40 401.80"/></svg>
<span class="t" style="left:132.70px;top:387.00px;font-size:16.25px;color:#cccccc;letter-spacing:0.022px;">help</span>
<svg class="b" style="left:114.40px;top:415.30px" width="10.40" height="16.00" viewBox="114.40 415.30 10.40 16.00" fill="none" stroke="#cccccc" stroke-width="1.4"><path d="M116.40 417.30L122.80 423.30L116.40 429.30"/></svg>
<span class="t" style="left:132.70px;top:414.00px;font-size:16.25px;color:#cccccc;letter-spacing:0.071px;">history</span>
<svg class="b" style="left:114.40px;top:442.80px" width="10.40" height="16.00" viewBox="114.40 442.80 10.40 16.00" fill="none" stroke="#cccccc" stroke-width="1.4"><path d="M116.40 444.80L122.80 450.80L116.40 456.80"/></svg>
<span class="t" style="left:132.70px;top:442.00px;font-size:16.25px;color:#cccccc;letter-spacing:0.115px;">home</span>
<svg class="b" style="left:114.40px;top:470.30px" width="10.40" height="16.00" viewBox="114.40 470.30 10.40 16.00" fill="none" stroke="#cccccc" stroke-width="1.4"><path d="M116.40 472.30L122.80 478.30L116.40 484.30"/></svg>
<span class="t" style="left:132.70px;top:469.00px;font-size:16.25px;color:#cccccc;letter-spacing:-0.039px;">hosted</span>
<svg class="b" style="left:110.50px;top:499.90px" width="16.40" height="10.60" viewBox="110.50 499.90 16.40 10.60" fill="none" stroke="#cccccc" stroke-width="1.4"><path d="M112.50 501.90L118.70 508.50L124.90 501.90"/></svg>
<span class="t" style="left:132.70px;top:497.00px;font-size:16.25px;color:#e2c08d;letter-spacing:0.222px;">interceptor</span>
<div class="b" style="left:422.6px;top:499.30px;width:10.4px;height:10.4px;border-radius:50%;background:#8a785d"></div>
<div class="b" style="left:60px;top:518.75px;width:394px;height:27.5px;background:#37373d;"></div>
<span class="t" style="left:119.00px;top:524.00px;font-size:14.3px;color:#519aba;font-weight:700;transform:scaleX(0.8369);transform-origin:0 0;">TS</span>
<span class="t" style="left:142.75px;top:524.00px;font-size:16.25px;color:#e2c08d;letter-spacing:-0.105px;">auth.guard.ts</span>
<span class="t" style="left:419.50px;top:525.00px;font-size:16.7px;color:#c0a57d;transform:scaleX(1.1204);transform-origin:0 0;">M</span>
<span class="t" style="left:119.00px;top:551.00px;font-size:14.3px;color:#519aba;font-weight:700;transform:scaleX(0.8369);transform-origin:0 0;">TS</span>
<span class="t" style="left:142.75px;top:552.00px;font-size:16.25px;color:#cccccc;letter-spacing:0.062px;">auth.interceptor.ts</span>
<span class="t" style="left:119.00px;top:579.00px;font-size:14.3px;color:#519aba;font-weight:700;transform:scaleX(0.8369);transform-origin:0 0;">TS</span>
<span class="t" style="left:142.75px;top:579.00px;font-size:16.25px;color:#e2c08d;transform:scaleX(0.9544);transform-origin:0 0;">auth.service.ts</span>
<span class="t" style="left:419.50px;top:580.00px;font-size:16.7px;color:#bca178;transform:scaleX(1.1204);transform-origin:0 0;">M</span>
<span class="t" style="left:119.00px;top:606.00px;font-size:14.3px;color:#519aba;font-weight:700;transform:scaleX(0.8369);transform-origin:0 0;">TS</span>
<span class="t" style="left:142.75px;top:607.00px;font-size:16.25px;color:#cccccc;letter-spacing:-0.178px;">AuthenticateRequest.ts</span>
<span class="t" style="left:119.00px;top:634.00px;font-size:14.3px;color:#519aba;font-weight:700;transform:scaleX(0.8369);transform-origin:0 0;">TS</span>
<span class="t" style="left:142.75px;top:634.00px;font-size:16.25px;color:#cccccc;letter-spacing:-0.244px;">AuthenticateResponse.ts</span>
<svg class="b" style="left:114.40px;top:662.80px" width="10.40" height="16.00" viewBox="114.40 662.80 10.40 16.00" fill="none" stroke="#cccccc" stroke-width="1.4"><path d="M116.40 664.80L122.80 670.80L116.40 676.80"/></svg>
<span class="t" style="left:132.70px;top:662.00px;font-size:16.25px;color:#e2c08d;transform:scaleX(1.0453);transform-origin:0 0;">login</span>
<div class="b" style="left:422.6px;top:664.30px;width:10.4px;height:10.4px;border-radius:50%;background:#8a785d"></div>
<svg class="b" style="left:110.50px;top:692.40px" width="16.40" height="10.60" viewBox="110.50 692.40 16.40 10.60" fill="none" stroke="#cccccc" stroke-width="1.4"><path d="M112.50 694.40L118.70 701.00L124.90 694.40"/></svg>
<span class="t" style="left:132.70px;top:689.00px;font-size:16.25px;color:#cccccc;letter-spacing:0.164px;">loginpage</span>
<svg class="b" style="left:119.00px;top:716.10px" width="16" height="16" viewBox="-8 -8 16 16" fill="none" stroke="#519aba" stroke-width="1.9"><path d="M-1.5 -5.600L-3.300 5.600M3.500 -5.600L1.700 5.600M-5.400 -2.100H5.800M-5.800 2.100H5.400"/></svg>
<span class="t" style="left:142.75px;top:717.00px;font-size:16.25px;color:#cccccc;letter-spacing:-0.082px;">loginpage.component.css</span>
<svg class="b" style="left:119.20px;top:744.90px" width="16" height="14" viewBox="-8 -7 16 14" fill="none" stroke="#e37933" stroke-width="2"><path d="M-1.6 -4.4L-5.6 0L-1.6 4.4M1.6 -4.4L5.600 0L1.6 4.4"/></svg>
<span class="t" style="left:142.75px;top:744.00px;font-size:16.25px;color:#cccccc;letter-spacing:0.138px;">loginpage.component.html</span>
<span class="t" style="left:119.40px;top:771.00px;font-size:14.3px;color:#e37933;font-weight:700;transform:scaleX(0.8369);transform-origin:0 0;">TS</span>
<span class="t" style="left:142.75px;top:772.00px;font-size:16.25px;color:#cccccc;letter-spacing:-0.069px;">loginpage.component.spec.ts</span>
<span class="t" style="left:119.00px;top:799.00px;font-size:14.3px;color:#519aba;font-weight:700;transform:scaleX(0.8369);transform-origin:0 0;">TS</span>
<span class="t" style="left:142.75px;top:799.00px;font-size:16.25px;color:#cccccc;letter-spacing:0.054px;">loginpage.component.ts</span>
<svg class="b" style="left:110.50px;top:829.90px" width="16.40" height="10.60" viewBox="110.50 829.90 16.40 10.60" fill="none" stroke="#cccccc" stroke-width="1.4"><path d="M112.50 831.90L118.70 838.50L124.90 831.90"/></svg>
<span class="t" style="left:132.70px;top:827.00px;font-size:16.25px;color:#cccccc;letter-spacing:0.015px;">menu</span>
<svg class="b" style="left:119.00px;top:853.60px" width="16" height="16" viewBox="-8 -8 16 16" fill="none" stroke="#519aba" stroke-width="1.9"><path d="M-1.5 -5.600L-3.300 5.600M3.500 -5.600L1.700 5.600M-5.400 -2.100H5.800M-5.800 2.100H5.400"/></svg>
<span class="t" style="left:142.75px;top:854.00px;font-size:16.25px;color:#cccccc;letter-spacing:-0.181px;">menu.component.css</span>
<svg class="b" style="left:119.20px;top:882.40px" width="16" height="14" viewBox="-8 -7 16 14" fill="none" stroke="#e37933" stroke-width="2"><path d="M-1.6 -4.4L-5.6 0L-1.6 4.4M1.6 -4.4L5.600 0L1.6 4.4"/></svg>
<span class="t" style="left:142.75px;top:882.00px;font-size:16.25px;color:#cccccc;letter-spacing:0.107px;">menu.component.html</span>
<span class="t" style="left:119.40px;top:909.00px;font-size:14.3px;color:#e37933;font-weight:700;transform:scaleX(0.8369);transform-origin:0 0;">TS</span>
<span class="t" style="left:142.75px;top:909.00px;font-size:16.25px;color:#cccccc;letter-spacing:-0.146px;">menu.component.spec.ts</span>
<span class="t" style="left:119.00px;top:936.00px;font-size:14.3px;color:#519aba;font-weight:700;transform:scaleX(0.8369);transform-origin:0 0;">TS</span>
<span class="t" style="left:142.75px;top:937.00px;font-size:16.25px;color:#cccccc;letter-spacing:-0.008px;">menu.component.ts</span>
<svg class="b" style="left:110.50px;top:967.40px" width="16.40" height="10.60" viewBox="110.50 967.40 16.40 10.60" fill="none" stroke="#cccccc" stroke-width="1.4"><path d="M112.50 969.40L118.70 976.00L124.90 969.40"/></svg>
<span class="t" style="left:132.70px;top:964.00px;font-size:16.25px;color:#cccccc;letter-spacing:0.157px;">notifications</span>
<svg class="b" style="left:119.00px;top:991.10px" width="16" height="16" viewBox="-8 -8 16 16" fill="none" stroke="#519aba" stroke-width="1.9"><path d="M-1.5 -5.600L-3.300 5.600M3.500 -5.600L1.700 5.600M-5.400 -2.100H5.800M-5.800 2.100H5.400"/></svg>
<span class="t" style="left:142.75px;top:992.00px;font-size:16.25px;color:#cccccc;letter-spacing:-0.047px;">notifications.component.css</span>
<svg class="b" style="left:119.20px;top:1019.90px" width="16" height="14" viewBox="-8 -7 16 14" fill="none" stroke="#e37933" stroke-width="2"><path d="M-1.6 -4.4L-5.6 0L-1.6 4.4M1.6 -4.4L5.600 0L1.6 4.4"/></svg>
<span class="t" style="left:142.75px;top:1019.00px;font-size:16.25px;color:#cccccc;letter-spacing:0.142px;">notifications.component.html</span>
<span class="t" style="left:119.40px;top:1046.00px;font-size:14.3px;color:#e37933;font-weight:700;transform:scaleX(0.8369);transform-origin:0 0;">TS</span>
<span class="t" style="left:142.75px;top:1047.00px;font-size:16.25px;color:#cccccc;letter-spacing:-0.034px;">notifications.component.spec.ts</span>
<span class="t" style="left:119.00px;top:1074.00px;font-size:14.3px;color:#519aba;font-weight:700;transform:scaleX(0.8369);transform-origin:0 0;">TS</span>
<span class="t" style="left:142.75px;top:1074.00px;font-size:16.25px;color:#cccccc;letter-spacing:0.072px;">notifications.component.ts</span>
<svg class="b" style="left:110.50px;top:1104.90px" width="16.40" height="10.60" viewBox="110.50 1104.90 16.40 10.60" fill="none" stroke="#cccccc" stroke-width="1.4"><path d="M112.50 1106.90L118.70 1113.50L124.90 1106.90"/></svg>
<span class="t" style="left:132.70px;top:1102.00px;font-size:16.25px;color:#cccccc;letter-spacing:0.060px;">pools</span>
<svg class="b" style="left:119.00px;top:1128.60px" width="16" height="16" viewBox="-8 -8 16 16" fill="none" stroke="#519aba" stroke-width="1.9"><path d="M-1.5 -5.600L-3.300 5.600M3.500 -5.600L1.700 5.600M-5.400 -2.100H5.800M-5.800 2.100H5.400"/></svg>
<span class="t" style="left:142.75px;top:1129.00px;font-size:16.25px;color:#cccccc;letter-spacing:-0.159px;">pools.component.css</span>
<svg class="b" style="left:119.20px;top:1157.40px" width="16" height="14" viewBox="-8 -7 16 14" fill="none" stroke="#e37933" stroke-width="2"><path d="M-1.6 -4.4L-5.6 0L-1.6 4.4M1.6 -4.4L5.600 0L1.6 4.4"/></svg>
<span class="t" style="left:142.75px;top:1157.00px;font-size:16.25px;color:#cccccc;letter-spacing:0.111px;">pools.component.html</span>
<span class="t" style="left:119.40px;top:1184.00px;font-size:14.3px;color:#e37933;font-weight:700;transform:scaleX(0.8369);transform-origin:0 0;">TS</span>
<span class="t" style="left:142.75px;top:1184.00px;font-size:16.25px;color:#cccccc;letter-spacing:-0.130px;">pools.component.spec.ts</span>
<span class="t" style="left:119.00px;top:1211.00px;font-size:14.3px;color:#519aba;font-weight:700;transform:scaleX(0.8369);transform-origin:0 0;">TS</span>
<span class="t" style="left:142.75px;top:1212.00px;font-size:16.25px;color:#cccccc;letter-spacing:0.005px;">pools.component.ts</span>
<svg class="b" style="left:114.40px;top:1240.30px" width="10.40" height="16.00" viewBox="114.40 1240.30 10.40 16.00" fill="none" stroke="#cccccc" stroke-width="1.4"><path d="M116.40 1242.30L122.80 1248.30L116.40 1254.30"/></svg>
<span class="t" style="left:132.70px;top:1239.00px;font-size:16.25px;color:#cccccc;transform:scaleX(1.0672);transform-origin:0 0;">portfolio</span>
<svg class="b" style="left:110.50px;top:1269.90px" width="16.40" height="10.60" viewBox="110.50 1269.90 16.40 10.60" fill="none" stroke="#cccccc" stroke-width="1.4"><path d="M112.50 1271.90L118.70 1278.50L124.90 1271.90"/></svg>
<span class="t" style="left:132.70px;top:1267.00px;font-size:16.25px;color:#cccccc;letter-spacing:-0.239px;">referrals</span>
<svg class="b" style="left:119.00px;top:1293.60px" width="16" height="16" viewBox="-8 -8 16 16" fill="none" stroke="#519aba" stroke-width="1.9"><path d="M-1.5 -5.600L-3.300 5.600M3.500 -5.600L1.700 5.600M-5.400 -2.100H5.800M-5.800 2.100H5.400"/></svg>
<span class="t" style="left:142.75px;top:1295.00px;font-size:16.25px;color:#cccccc;">referrals.component.css</span>
<div class="b" style="left:115px;top:518.25px;width:1px;height:137.5px;background:#585858;"></div>
</div></div>
<div class="b" style="left:60px;top:82px;width:394px;height:27px;background:#252526"></div>
<div class="b" style="left:60px;top:109px;width:394px;height:5px;background:linear-gradient(rgba(0,0,0,.42),rgba(0,0,0,.12) 55%,rgba(0,0,0,0))"></div>
<svg class="b" style="left:64.20px;top:89.40px" width="16.80" height="10.80" viewBox="64.20 89.40 16.80 10.80" fill="none" stroke="#cccccc" stroke-width="1.5"><path d="M66.20 91.40L72.60 98.20L79.00 91.40"/></svg>
<span class="t" style="left:85.00px;top:88.00px;font-size:13.4px;color:#cccccc;font-weight:700;transform:scaleX(0.9607);transform-origin:0 0;">CHEST1 (WORKSPACE)</span>
<div class="b" style="left:60px;top:1298px;width:394px;height:1px;background:#454546;"></div>
<svg class="b" style="left:67.90px;top:1304.00px" width="10.40" height="16.00" viewBox="67.90 1304.00 10.40 16.00" fill="none" stroke="#cccccc" stroke-width="1.5"><path d="M69.90 1306.00L76.30 1312.00L69.90 1318.00"/></svg>
<span class="t" style="left:85.40px;top:1306.00px;font-size:13.4px;color:#cccccc;font-weight:700;letter-spacing:-0.164px;">OUTLINE</span>
<div class="b" style="left:60px;top:1325px;width:394px;height:1px;background:#454546;"></div>
<svg class="b" style="left:67.90px;top:1331.50px" width="10.40" height="16.00" viewBox="67.90 1331.50 10.40 16.00" fill="none" stroke="#cccccc" stroke-width="1.5"><path d="M69.90 1333.50L76.30 1339.50L69.90 1345.50"/></svg>
<span class="t" style="left:85.40px;top:1334.00px;font-size:13.4px;color:#cccccc;font-weight:700;letter-spacing:-0.086px;">TIMELINE</span>
<div class="b" style="left:0px;top:0px;width:2560px;height:38px;background:#3c3c3c;"></div>
<svg class="b" style="left:11.8px;top:8.9px" width="20.3" height="20.1" viewBox="0 0 100 100">
<path d="M96.46 10.8L75.86.88a6.23 6.23 0 0 0-7.11 1.2L1.3 63.58a4.17 4.17 0 0 0 0 6.17l5.51 5a2.77 2.77 0 0 0 3.54.16L93.36 13.37c2.73-2.07 6.64-.12 6.64 3.3v-.24a6.25 6.25 0 0 0-3.54-5.63z" fill="#2a86c6"/>
<path d="M96.46 89.2l-20.6 9.92a6.23 6.23 0 0 1-7.11-1.2L1.3 36.42a4.17 4.17 0 0 1 0-6.17l5.51-5a2.77 2.77 0 0 1 3.54-.16l83.01 61.54c2.73 2.07 6.64.12 6.64-3.3v.24a6.25 6.25 0 0 1-3.54 5.63z" fill="#1b88d8"/>
<path d="M75.86 99.13a6.23 6.23 0 0 1-7.11-1.21c2.31 2.3 6.25.67 6.25-2.59V4.67c0-3.26-3.94-4.9-6.25-2.59a6.23 6.23 0 0 1 7.11-1.2l20.6 9.9A6.25 6.25 0 0 1 100 16.41v67.18a6.25 6.25 0 0 1-3.54 5.63z" fill="#3aa7f5"/>
</svg>
<span class="t" style="left:54.60px;top:12.00px;font-size:15.7px;color:#cccccc;transform:scaleX(0.9058);transform-origin:0 0;">File</span>
<span class="t" style="left:98.50px;top:12.00px;font-size:15.7px;color:#cccccc;letter-spacing:-0.082px;">Edit</span>
<span class="t" style="left:145.40px;top:12.00px;font-size:15.7px;color:#cccccc;letter-spacing:0.044px;">Selection</span>
<span class="t" style="left:230.30px;top:12.00px;font-size:15.7px;color:#cccccc;letter-spacing:0.127px;">View</span>
<span class="t" style="left:284.70px;top:12.00px;font-size:15.7px;color:#cccccc;transform:scaleX(0.9696);transform-origin:0 0;">Go</span>
<span class="t" style="left:326.00px;top:12.00px;font-size:15.7px;color:#cccccc;transform:scaleX(0.9416);transform-origin:0 0;">Run</span>
<span class="t" style="left:374.10px;top:12.00px;font-size:15.7px;color:#cccccc;letter-spacing:0.060px;">Terminal</span>
<span class="t" style="left:454.40px;top:12.00px;font-size:15.7px;color:#cccccc;letter-spacing:0.178px;">Help</span>
<span class="t" style="left:1095.30px;top:11.00px;font-size:15px;color:#cccccc;letter-spacing:-0.149px;">auth.guard.ts - Chest1 (Workspace) - Visual Studio Code</span>
<svg class="b" style="left:2260px;top:6px" width="130" height="26" viewBox="0 0 130 26" fill="none" stroke="#cccccc" stroke-width="1.5">
<rect x="5.6" y="4.8" width="16.8" height="16.3" rx="2"/><path d="M6 5.5h7.6v15H6z" fill="#cccccc" stroke="none"/>
<rect x="37.9" y="4.8" width="16.8" height="16.3" rx="2"/><path d="M38 16.9h16.6"/>
<rect x="70.5" y="4.8" width="16.8" height="16.3" rx="2"/><path d="M80.7 5v16"/>
<rect x="104" y="6" width="5.6" height="14" rx="1.2"/><rect x="114.3" y="6" width="5.4" height="5.2" rx="1.2"/><rect x="114.3" y="14.8" width="5.4" height="5.2" rx="1.2"/>
</svg>
<svg class="b" style="left:2400px;top:0" width="160" height="38" viewBox="0 0 160 38" fill="none" stroke="#e8e8e8" stroke-width="1.1">
<path d="M11 18.5h13"/>
<path d="M67.5 14.5h10v10h-10z M69.8 14.3v-1.8h10.2v10.2h-2.3" stroke-linejoin="round"/>
<path d="M125.2 12.2l12.8 12.8M138 12.2l-12.8 12.8"/>
</svg>
<div class="b" style="left:0px;top:38px;width:60px;height:1314px;background:#333333;"></div>
<div class="b" style="left:0px;top:38px;width:2.2px;height:60px;background:#ffffff;"></div>
<svg class="b" style="left:0;top:38px" width="60" height="300" viewBox="0 38 60 300" fill="none" stroke-linejoin="round" stroke-linecap="butt">
<!-- files -->
<g stroke="#ffffff" stroke-width="2.3">
<path d="M36.2 54H26.4q-1.5 0-1.5 1.5V72.6q0 1.5 1.5 1.5H40.1q1.5 0 1.5-1.5V59.4z"/>
<path d="M36 54.2v5.4h5.4" stroke-width="1.8"/>
<path d="M24.2 61.2H18.8q-1.5 0-1.5 1.5V80.4q0 1.5 1.5 1.5H32.5q1.5 0 1.5-1.5V74.6"/>
</g>
<!-- search -->
<g stroke="#858585" stroke-width="2.3">
<circle cx="33.9" cy="123.4" r="9.7"/>
<path d="M27.4 130.7L17.2 142"/>
</g>
<!-- scm -->
<g stroke="#858585" stroke-width="2.2">
<circle cx="23.3" cy="177.6" r="3.8"/><circle cx="23.3" cy="198" r="3.8"/><circle cx="36.5" cy="183" r="3.8"/>
<path d="M23.3 181.4V194.2M36.5 186.8c0 4-3 4.6-6.5 4.6c-3.5 0-6.7 .3-6.7 3"/>
</g>
<!-- debug -->
<g stroke="#858585" stroke-width="2.2">
<path d="M25.3 246.3V234.2L43.6 245.6L31.8 253.6"/>
<ellipse cx="22.5" cy="256" rx="4.6" ry="6.2"/>
<path d="M17.8 253.6h9.4M18 256.2h-3.4M27 256.2h3.4M18.6 252.2l-3.2-2.6M26.4 252.2l3.2-2.6M18.8 260l-3.4 2.8M26.2 260l3.4 2.8" stroke-width="1.8"/>
</g>
<!-- extensions -->
<g stroke="#858585" stroke-width="2.2">
<path d="M27.2 310.8V300.8q0-1.5-1.5-1.5H17.4q-1.5 0-1.5 1.5V319.9q0 1.5 1.5 1.5H37q1.5 0 1.5-1.5V312.3q0-1.5-1.5-1.5H15.9M27.2 310.8V321.4"/>
<rect x="32.8" y="294.3" width="10.9" height="10.2" rx="1.5"/>
</g>
</svg>
<div class="b" style="left:30px;top:187.7px;width:20px;height:20px;border-radius:50%;background:#007acc"></div>
<span class="t" style="left:36.80px;top:193.00px;font-size:11.5px;color:#ffffff;font-weight:700;">8</span>
<svg class="b" style="left:0;top:1240px" width="60" height="110" viewBox="0 1240 60 110" fill="none" stroke="#858585" stroke-width="2.2" stroke-linejoin="round">
<circle cx="30" cy="1262.9" r="14.1"/>
<circle cx="30" cy="1259.8" r="6.3"/>
<path d="M20.6 1273.2c1.4-4.6 5-7 9.4-7s8 2.4 9.4 7"/>
<circle cx="30" cy="1322.9" r="3.300" stroke-width="2.800"/>
<path d="M26.75 1314.51L27.69 1308.69L32.31 1308.69L33.25 1314.51L33.64 1314.67L38.42 1311.22L41.68 1314.48L38.23 1319.26L38.39 1319.65L44.21 1320.59L44.21 1325.21L38.39 1326.15L38.23 1326.54L41.68 1331.32L38.42 1334.58L33.64 1331.13L33.25 1331.29L32.31 1337.11L27.69 1337.11L26.75 1331.29L26.36 1331.13L21.58 1334.58L18.32 1331.32L21.77 1326.54L21.61 1326.15L15.79 1325.21L15.79 1320.59L21.61 1319.65L21.77 1319.26L18.32 1314.48L21.58 1311.22L26.36 1314.67Z" stroke-width="2.5" stroke-linejoin="miter"/>
</svg>
<div class="b" style="left:0px;top:1352.75px;width:2560px;height:27px;background:#007acc;"></div>
<svg class="b" style="left:0;top:1352px" width="230" height="27" viewBox="0 1352 230 27" fill="none" stroke="#ffffff" stroke-width="1.5" stroke-linejoin="round" stroke-linecap="round">
<circle cx="23.600" cy="1360" r="2.300"/><circle cx="23.600" cy="1372.200" r="2.300"/><circle cx="32" cy="1363.200" r="2.300"/>
<path d="M23.600 1362.400v7.400M32 1365.600c0 2.800-2.400 3.200-4.300 3.200s-4.100 .300-4.100 1.400"/>
<path d="M117.600 1370.600H116a3.400 3.400 0 0 1-.350-6.780a5.600 5.600 0 0 1 10.300 0a3.400 3.400 0 0 1-.350 6.780H124M120.800 1372.800v-6.400M118.200 1369l2.600-2.600l2.600 2.600"/>
<circle cx="157.900" cy="1366" r="7.300"/><path d="M154.800 1362.900l6.200 6.200M161 1362.900l-6.200 6.200"/>
<path d="M191.800 1358.700l7.300 13.600h-14.600z"/><path d="M191.800 1363.600v4.600M191.800 1369.800v.600"/>
</svg>
<span class="t" style="left:40.40px;top:1359.00px;font-size:15px;color:#ffffff;letter-spacing:-0.081px;">master*</span>
<span class="t" style="left:170.70px;top:1359.00px;font-size:15px;color:#ffffff;transform:scaleX(0.9708);transform-origin:0 0;">0</span>
<span class="t" style="left:204.90px;top:1359.00px;font-size:15px;color:#ffffff;transform:scaleX(0.9708);transform-origin:0 0;">0</span>
<span class="t" style="left:2095.20px;top:1359.00px;font-size:15px;color:#ffffff;transform:scaleX(0.9481);transform-origin:0 0;">Ln 18, Col 18</span>
<span class="t" style="left:2200.20px;top:1359.00px;font-size:15px;color:#ffffff;transform:scaleX(0.9083);transform-origin:0 0;">Spaces: 2</span>
<span class="t" style="left:2281.60px;top:1359.00px;font-size:15px;color:#ffffff;transform:scaleX(0.9153);transform-origin:0 0;">UTF-8</span>
<span class="t" style="left:2341.30px;top:1359.00px;font-size:15px;color:#ffffff;transform:scaleX(0.7707);transform-origin:0 0;">LF</span>
<span class="t" style="left:2374.50px;top:1358.00px;font-size:15.2px;color:#ffffff;letter-spacing:0.263px;">{ }</span>
<span class="t" style="left:2398.60px;top:1359.00px;font-size:15px;color:#ffffff;transform:scaleX(0.9510);transform-origin:0 0;">TypeScript</span>
<svg class="b" style="left:2480px;top:1350.800px" width="80" height="27" viewBox="2480 1352 80 27" fill="none" stroke="#ffffff" stroke-width="1.4" stroke-linejoin="round" stroke-linecap="round">
<path d="M2492.2 1361.5v-2.8h10.4v7.6h-2.4v2.4l-2.4-2.4"/>
<circle cx="2493" cy="1365.8" r="2.5"/><path d="M2487.6 1374.6c.6-3.6 2.8-5 5.4-5s4.8 1.400 5.400 5"/>
<path d="M2527 1371.200h11.700l-1.600-2.400v-4.300a4.250 4.250 0 0 0-8.500 0v4.300z"/><path d="M2531.300 1373.300a1.600 1.600 0 0 0 3.100 0"/>
</svg>
</body></html>
